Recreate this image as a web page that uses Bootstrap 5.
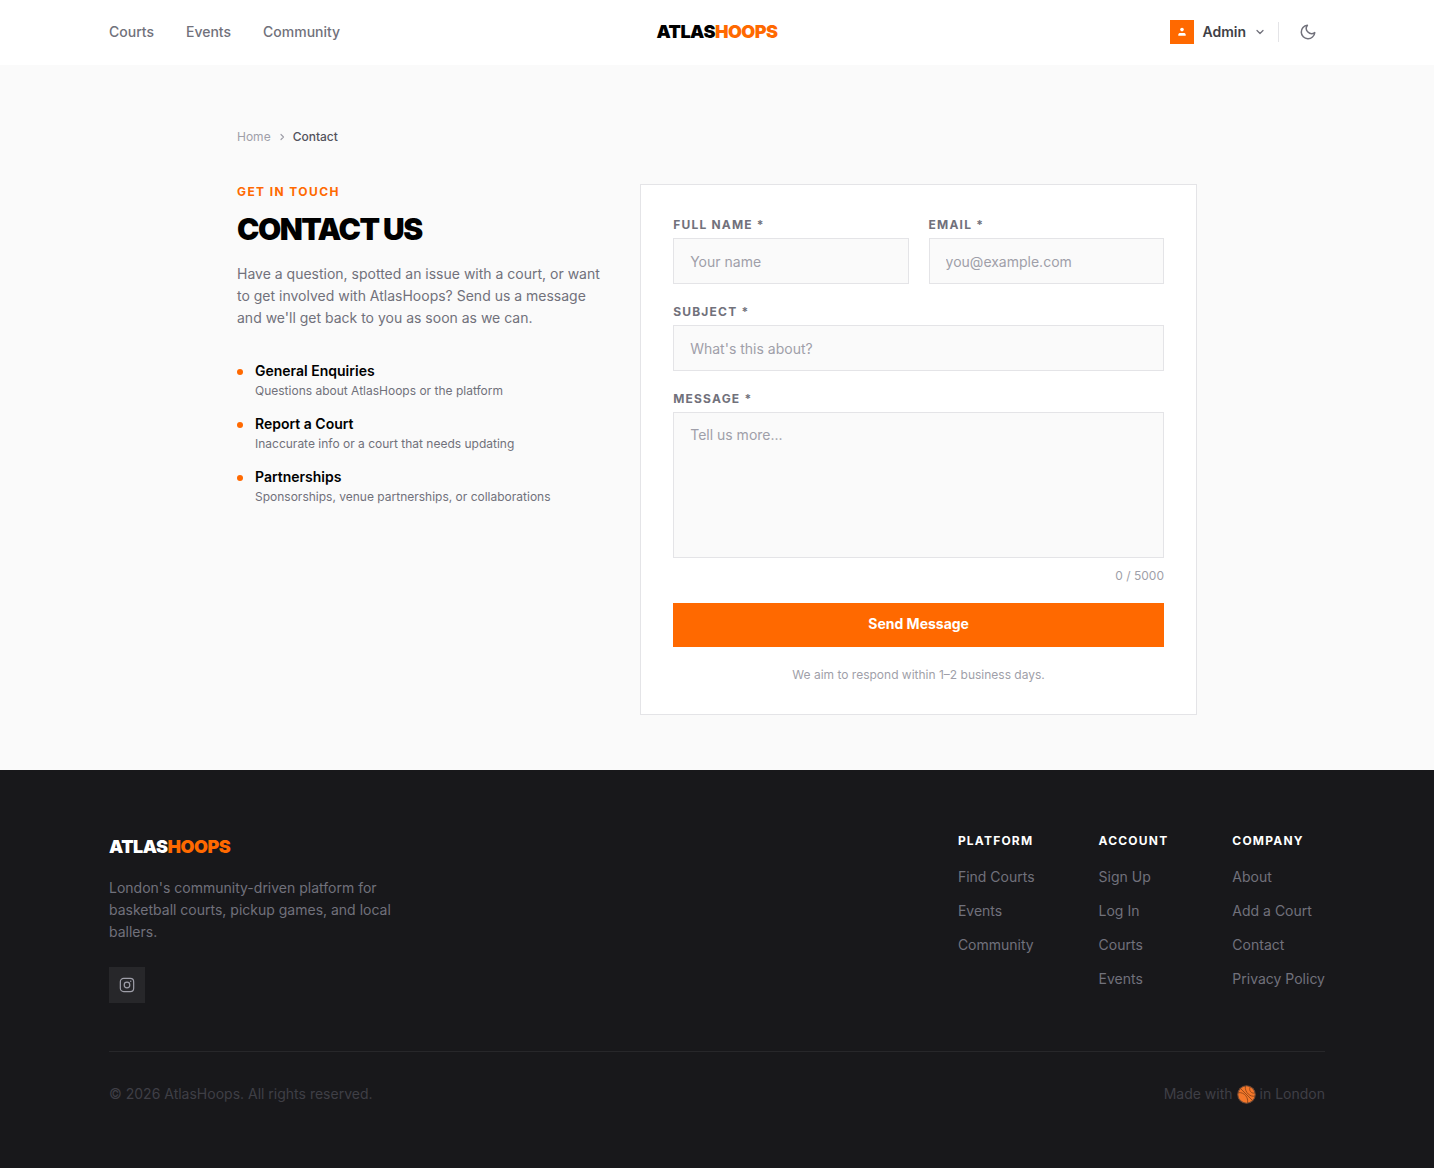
<!DOCTYPE html>
<html lang="en">
<head>
<meta charset="utf-8">
<meta name="viewport" content="width=device-width, initial-scale=1">
<title>Contact | AtlasHoops</title>
<link href="https://cdn.jsdelivr.net/npm/bootstrap@5.3.0/dist/css/bootstrap.min.css" rel="stylesheet">
<style>
:root { --brand: #ff6900; --ink: #09090b; --gray-4: #9f9fa9; --gray-5: #71717b; --gray-6: #52525c; --line: #e4e4e7; --night: #18181b; }
body { font-family: Inter, sans-serif; font-size: 14px; line-height: 22px; background: #fafafa; color: var(--gray-5); }
a { color: inherit; text-decoration: none; }
a:hover { color: var(--brand); }
.wrap-wide { max-width: 1280px; padding: 0 32px; }
.wrap-mid { max-width: 1024px; padding: 64px 32px 55px; }
.site-head { border-bottom: 1px solid transparent; }
.site-bar { height: 64px; }
.side-area { flex: 1 1 0; }
.site-nav { gap: 32px; font-weight: 500; }
.logo { font-size: 18px; line-height: 28px; font-weight: 900; letter-spacing: -0.5px; color: #000; }
.logo span { color: var(--brand); }
.user-btn { gap: 8px; font-size: 14px; line-height: 20px; font-weight: 600; color: #3f3f46; }
.avatar { width: 24px; height: 24px; background: var(--brand); }
.head-rule { width: 1px; height: 20px; background: var(--line); margin: 0 12px; }
.theme-btn { width: 34px; height: 34px; color: var(--gray-5); }
.crumbs { font-size: 12px; line-height: 16px; gap: 7px; margin-bottom: 39px; color: var(--gray-4); }
.crumbs .here { color: var(--gray-6); font-weight: 500; }
.contact-grid { grid-template-columns: repeat(5, 1fr); gap: 48px; }
.intro { grid-column: span 2; }
.intro-text { margin: 0 -16px 0 0; }
.panel { grid-column: span 3; padding: 32px; border: 1px solid var(--line); }
.kicker { font-size: 12px; line-height: 16px; font-weight: 700; letter-spacing: 1.4px; color: var(--brand); margin-bottom: 11px; }
.title { font-size: 30px; line-height: 36px; font-weight: 900; letter-spacing: -1.5px; color: #000; margin-bottom: 16px; }
.topics { margin-top: 32px; gap: 15px; }
.topics li { gap: 12px; }
.dot { width: 6px; height: 6px; background: var(--brand); margin-top: 8px; }
.topic-name { line-height: 20px; font-weight: 600; color: #000; }
.topic-text { font-size: 12px; line-height: 16px; margin-top: 2px; }
.fields { gap: 20px; }
.pair { grid-template-columns: 1fr 1fr; gap: 20px; }
.field-label { display: block; font-size: 12px; line-height: 15px; font-weight: 700; letter-spacing: 1.2px; margin-bottom: 6px; }
.field { border: 1px solid var(--line); border-radius: 0; background: #fafafa; padding: 12px 16px; font-size: 14px; line-height: 20px; height: 46px; }
textarea.field { height: 146px; resize: none; }
.field::placeholder { color: var(--gray-4); }
.field:focus { border-color: var(--brand); box-shadow: none; background: #fafafa; }
.fine { font-size: 12px; line-height: 15px; color: var(--gray-4); }
.counter { margin-top: 10px; }
.send { height: 44px; border: 0; border-radius: 0; background: var(--brand); color: #fff; font-size: 14px; line-height: 20px; font-weight: 700; padding: 11px 0 13px; }
.send:hover { background: #e85f00; color: #fff; }
.site-foot { background: var(--night); padding: 63px 0; }
.foot-about { max-width: 288px; }
.foot-about p { margin: 16px 0 24px; }
.social { width: 36px; height: 36px; background: #27272a; color: var(--gray-4); }
.foot-cols { gap: 64px; }
.foot-cols h2 { font-size: 12px; line-height: 16px; font-weight: 700; letter-spacing: 1.2px; color: #fff; margin-bottom: 17px; }
.foot-cols ul { gap: 12px; }
.foot-end { margin-top: 48px; padding-top: 31px; border-top: 1px solid #27272a; color: #3f3f46; }
</style>
<script src="https://cdn.jsdelivr.net/npm/bootstrap@5.3.0/dist/js/bootstrap.bundle.min.js" defer></script>
</head>
<body>
<header class="site-head bg-white">
  <div class="wrap-wide site-bar mx-auto d-flex align-items-center">
    <nav class="side-area site-nav d-flex" aria-label="Main">
      <a href="#">Courts</a><a href="#">Events</a><a href="#">Community</a>
    </nav>
    <a class="logo" href="#">ATLAS<span>HOOPS</span></a>
    <div class="side-area d-flex align-items-center justify-content-end">
      <button type="button" class="user-btn btn border-0 p-0 d-flex align-items-center">
        <span class="avatar d-flex align-items-center justify-content-center">
          <svg width="10" height="10" viewBox="0 0 10 10" fill="#fff" aria-hidden="true"><circle cx="5" cy="2.6" r="1.8"/><path d="M1.3 8.8V7.7c0-1 .9-1.7 2-1.7h3.4c1.1 0 2 .7 2 1.7v1.1z"/></svg>
        </span>
        <span>Admin</span>
        <svg width="12" height="12" viewBox="0 0 24 24" fill="none" stroke="#71717b" stroke-width="2.5" stroke-linecap="round" stroke-linejoin="round" aria-hidden="true"><path d="m6 9 6 6 6-6"/></svg>
      </button>
      <span class="head-rule"></span>
      <button type="button" class="theme-btn btn border-0 p-0 d-flex align-items-center justify-content-center" aria-label="Dark mode">
        <svg width="18" height="18" viewBox="0 0 24 24" fill="none" stroke="currentColor" stroke-width="2" stroke-linecap="round" stroke-linejoin="round" aria-hidden="true"><path d="M21 12.79A9 9 0 1 1 11.21 3 7 7 0 0 0 21 12.79z"/></svg>
      </button>
    </div>
  </div>
</header>

<main class="wrap-mid mx-auto">
  <nav class="crumbs d-flex align-items-center" aria-label="Breadcrumb">
    <a href="#">Home</a>
    <svg width="8" height="8" viewBox="0 0 8 8" fill="none" stroke="currentColor" stroke-width="1.2" stroke-linecap="round" stroke-linejoin="round" aria-hidden="true"><path d="m3 1.500 2.500 2.500L3 6.500"/></svg>
    <span class="here" aria-current="page">Contact</span>
  </nav>
  <div class="contact-grid d-grid">
    <section class="intro">
      <p class="kicker">GET IN TOUCH</p>
      <h1 class="title">CONTACT US</h1>
      <p class="intro-text">Have a question, spotted an issue with a court, or want to get involved with AtlasHoops? Send us a message and we'll get back to you as soon as we can.</p>
      <ul class="topics list-unstyled d-flex flex-column mb-0">
        <li class="d-flex"><span class="dot rounded-circle flex-shrink-0"></span><div><div class="topic-name">General Enquiries</div><div class="topic-text">Questions about AtlasHoops or the platform</div></div></li>
        <li class="d-flex"><span class="dot rounded-circle flex-shrink-0"></span><div><div class="topic-name">Report a Court</div><div class="topic-text">Inaccurate info or a court that needs updating</div></div></li>
        <li class="d-flex"><span class="dot rounded-circle flex-shrink-0"></span><div><div class="topic-name">Partnerships</div><div class="topic-text">Sponsorships, venue partnerships, or collaborations</div></div></li>
      </ul>
    </section>
    <form class="panel bg-white">
      <div class="fields d-flex flex-column">
        <div class="pair d-grid">
          <div><label class="field-label" for="name">FULL NAME *</label><input class="field form-control" id="name" type="text" placeholder="Your name" required></div>
          <div><label class="field-label" for="email">EMAIL *</label><input class="field form-control" id="email" type="email" placeholder="you@example.com" required></div>
        </div>
        <div><label class="field-label" for="subject">SUBJECT *</label><input class="field form-control" id="subject" type="text" placeholder="What's this about?" required></div>
        <div>
          <label class="field-label" for="message">MESSAGE *</label><textarea class="field form-control" id="message" maxlength="5000" placeholder="Tell us more..." required></textarea>
          <div class="fine counter text-end">0 / 5000</div>
        </div>
        <button type="submit" class="send btn w-100">Send Message</button>
        <p class="fine text-center mb-0">We aim to respond within 1–2 business days.</p>
      </div>
    </form>
  </div>
</main>

<footer class="site-foot">
  <div class="wrap-wide mx-auto">
    <div class="d-flex justify-content-between">
      <div class="foot-about">
        <a class="logo text-white" href="#">ATLAS<span>HOOPS</span></a>
        <p>London's community-driven platform for basketball courts, pickup games, and local ballers.</p>
        <a class="social d-flex align-items-center justify-content-center" href="#" aria-label="Instagram">
          <svg width="16" height="16" viewBox="0 0 24 24" fill="none" stroke="currentColor" stroke-width="1.8" aria-hidden="true"><rect x="2" y="2" width="20" height="20" rx="5"/><circle cx="12" cy="12" r="4.2"/><circle cx="17.6" cy="6.4" r="1" fill="currentColor" stroke="none"/></svg>
        </a>
      </div>
      <div class="foot-cols d-flex">
        <div><h2>PLATFORM</h2><ul class="list-unstyled d-flex flex-column mb-0"><li><a href="#">Find Courts</a></li><li><a href="#">Events</a></li><li><a href="#">Community</a></li></ul></div>
        <div><h2>ACCOUNT</h2><ul class="list-unstyled d-flex flex-column mb-0"><li><a href="#">Sign Up</a></li><li><a href="#">Log In</a></li><li><a href="#">Courts</a></li><li><a href="#">Events</a></li></ul></div>
        <div><h2>COMPANY</h2><ul class="list-unstyled d-flex flex-column mb-0"><li><a href="#">About</a></li><li><a href="#">Add a Court</a></li><li><a href="#">Contact</a></li><li><a href="#">Privacy Policy</a></li></ul></div>
      </div>
    </div>
    <div class="foot-end d-flex justify-content-between">
      <span>© 2026 AtlasHoops. All rights reserved.</span>
      <span class="d-flex align-items-center gap-1">Made with
        <svg width="19" height="19" viewBox="0 0 18 18" role="img" aria-label="basketball"><circle cx="9" cy="9" r="8.3" fill="#f4772a" stroke="#6f4a37" stroke-width="1"/><g fill="none" stroke="#8a4216" stroke-width="0.800"><path d="M3.200 3.200 14.800 14.800M8 .9c-.6 3 .6 5.800 2.800 7.800 1.800 1.600 4 2.300 6.300 1.800M1 7.300c3.200-.4 5.600.7 7.300 2.800 1.500 1.900 2.100 4.200 1.700 6.900M12.500 1.800c-.8 1.700-.6 3.200.3 4.400.9 1.100 2 1.600 3.600 1.500"/></g></svg>
        in London</span>
    </div>
  </div>
</footer>
</body>
</html>
